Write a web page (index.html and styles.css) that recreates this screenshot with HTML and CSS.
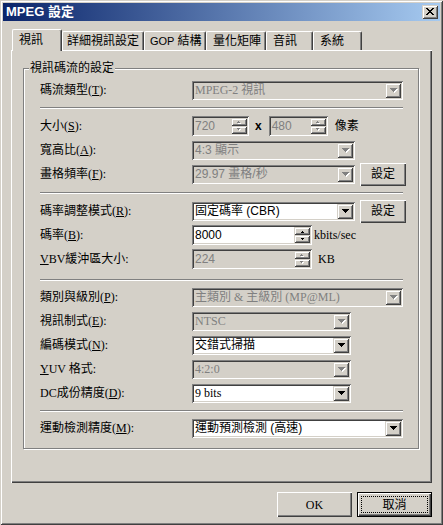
FILE: index.html
```html
<!DOCTYPE html>
<html>
<head>
<meta charset="utf-8">
<title>MPEG 設定</title>
<link rel="stylesheet" href="styles.css">
</head>
<body>
<div class="window">
  <div class="titlebar">
    <span class="title">MPEG 設定</span>
    <div class="close">
      <svg width="8" height="7" viewBox="0 0 8 7" shape-rendering="crispEdges"><path d="M0 0h2v1h-2zM6 0h2v1h-2zM1 1h2v1h-2zM5 1h2v1h-2zM2 2h4v1h-4zM3 3h2v1h-2zM2 4h4v1h-4zM1 5h2v1h-2zM5 5h2v1h-2zM0 6h2v1h-2zM6 6h2v1h-2z" fill="#000"/></svg>
    </div>
  </div>

  <div class="tabs">
    <div class="tab sel w1">視訊</div>
    <div class="tab w2">詳細視訊設定</div>
    <div class="tab w3"><span class="sans gop">GOP</span> 結構</div>
    <div class="tab w4">量化矩陣</div>
    <div class="tab w5">音訊</div>
    <div class="tab w6">系統</div>
  </div>

  <div class="panel">
    <div class="group">
      <div class="legend">視訊碼流的設定</div>
      <div class="rows">

        <div class="row">
          <span class="lbl">碼流類型(<u>T</u>):</span>
          <div class="combo dis full">
            <span class="val">MPEG-2 視訊</span>
            <span class="arrow"><svg width="8" height="5" viewBox="0 0 8 5" shape-rendering="crispEdges"><path d="M1 1h7v1h-7zM2 2h5v1h-5zM3 3h3v1h-3zM4 4h1v1h-1z" fill="#fff"/><path d="M0 0h7v1h-7zM1 1h5v1h-5zM2 2h3v1h-3zM3 3h1v1h-1z" fill="#808080"/></svg></span>
          </div>
        </div>

        <div class="sep s1"></div>

        <div class="row">
          <span class="lbl">大小(<u>S</u>):</span>
          <div class="spin dis sw1">
            <span class="val sans">720</span>
            <span class="btns">
              <span class="sb"><svg width="6" height="4" viewBox="0 0 6 4" shape-rendering="crispEdges"><path d="M2 1h1v1h-1zM1 2h3v1h-3z" fill="#fff" transform="translate(1,1)"/><path d="M2 0h1v1h-1zM1 1h3v1h-3z" fill="#808080" transform="translate(0,1)"/></svg></span>
              <span class="sb"><svg width="6" height="4" viewBox="0 0 6 4" shape-rendering="crispEdges"><path d="M1 0h3v1h-3zM2 1h1v1h-1z" fill="#fff" transform="translate(1,1)"/><path d="M1 0h3v1h-3zM2 1h1v1h-1z" fill="#808080"/></svg></span>
            </span>
          </div>
          <span class="times">x</span>
          <div class="spin dis sw2">
            <span class="val sans">480</span>
            <span class="btns">
              <span class="sb"><svg width="6" height="4" viewBox="0 0 6 4" shape-rendering="crispEdges"><path d="M2 1h1v1h-1zM1 2h3v1h-3z" fill="#fff" transform="translate(1,1)"/><path d="M2 0h1v1h-1zM1 1h3v1h-3z" fill="#808080" transform="translate(0,1)"/></svg></span>
              <span class="sb"><svg width="6" height="4" viewBox="0 0 6 4" shape-rendering="crispEdges"><path d="M1 0h3v1h-3zM2 1h1v1h-1z" fill="#fff" transform="translate(1,1)"/><path d="M1 0h3v1h-3zM2 1h1v1h-1z" fill="#808080"/></svg></span>
            </span>
          </div>
          <span class="unit-px">像素</span>
        </div>

        <div class="row">
          <span class="lbl">寬高比(<u>A</u>):</span>
          <div class="combo dis mid">
            <span class="val sans">4:3 顯示</span>
            <span class="arrow"><svg width="8" height="5" viewBox="0 0 8 5" shape-rendering="crispEdges"><path d="M1 1h7v1h-7zM2 2h5v1h-5zM3 3h3v1h-3zM4 4h1v1h-1z" fill="#fff"/><path d="M0 0h7v1h-7zM1 1h5v1h-5zM2 2h3v1h-3zM3 3h1v1h-1z" fill="#808080"/></svg></span>
          </div>
        </div>

        <div class="row">
          <span class="lbl">畫格頻率(<u>F</u>):</span>
          <div class="combo dis mid">
            <span class="val sans">29.97 畫格/秒</span>
            <span class="arrow"><svg width="8" height="5" viewBox="0 0 8 5" shape-rendering="crispEdges"><path d="M1 1h7v1h-7zM2 2h5v1h-5zM3 3h3v1h-3zM4 4h1v1h-1z" fill="#fff"/><path d="M0 0h7v1h-7zM1 1h5v1h-5zM2 2h3v1h-3zM3 3h1v1h-1z" fill="#808080"/></svg></span>
          </div>
          <button class="btn small">設定</button>
        </div>

        <div class="sep s2"></div>

        <div class="row">
          <span class="lbl">碼率調整模式(<u>R</u>):</span>
          <div class="combo mid">
            <span class="val sans">固定碼率 (CBR)</span>
            <span class="arrow"><svg width="7" height="4" viewBox="0 0 7 4" shape-rendering="crispEdges"><path d="M0 0h7v1h-7zM1 1h5v1h-5zM2 2h3v1h-3zM3 3h1v1h-1z" fill="#000"/></svg></span>
          </div>
          <button class="btn small">設定</button>
        </div>

        <div class="row">
          <span class="lbl">碼率(<u>B</u>):</span>
          <div class="spin sw3">
            <span class="val sans">8000</span>
            <span class="btns">
              <span class="sb"><svg width="5" height="3" viewBox="0 0 5 3" shape-rendering="crispEdges"><path d="M2 0h1v1h-1zM1 1h3v1h-3z" fill="#000" transform="translate(0,1)"/></svg></span>
              <span class="sb"><svg width="5" height="3" viewBox="0 0 5 3" shape-rendering="crispEdges"><path d="M1 0h3v1h-3zM2 1h1v1h-1z" fill="#000"/></svg></span>
            </span>
          </div>
          <span class="unit-k">kbits/sec</span>
        </div>

        <div class="row">
          <span class="lbl"><u>V</u>BV緩沖區大小:</span>
          <div class="spin dis sw3">
            <span class="val sans">224</span>
            <span class="btns">
              <span class="sb"><svg width="6" height="4" viewBox="0 0 6 4" shape-rendering="crispEdges"><path d="M2 1h1v1h-1zM1 2h3v1h-3z" fill="#fff" transform="translate(1,1)"/><path d="M2 0h1v1h-1zM1 1h3v1h-3z" fill="#808080" transform="translate(0,1)"/></svg></span>
              <span class="sb"><svg width="6" height="4" viewBox="0 0 6 4" shape-rendering="crispEdges"><path d="M1 0h3v1h-3zM2 1h1v1h-1z" fill="#fff" transform="translate(1,1)"/><path d="M1 0h3v1h-3zM2 1h1v1h-1z" fill="#808080"/></svg></span>
            </span>
          </div>
          <span class="unit-kb">KB</span>
        </div>

        <div class="sep s3"></div>

        <div class="row">
          <span class="lbl">類別與級別(<u>P</u>):</span>
          <div class="combo dis full">
            <span class="val">主類別 &amp; 主級別 (MP@ML)</span>
            <span class="arrow"><svg width="8" height="5" viewBox="0 0 8 5" shape-rendering="crispEdges"><path d="M1 1h7v1h-7zM2 2h5v1h-5zM3 3h3v1h-3zM4 4h1v1h-1z" fill="#fff"/><path d="M0 0h7v1h-7zM1 1h5v1h-5zM2 2h3v1h-3zM3 3h1v1h-1z" fill="#808080"/></svg></span>
          </div>
        </div>

        <div class="row">
          <span class="lbl">視訊制式(<u>E</u>):</span>
          <div class="combo dis short">
            <span class="val">NTSC</span>
            <span class="arrow"><svg width="8" height="5" viewBox="0 0 8 5" shape-rendering="crispEdges"><path d="M1 1h7v1h-7zM2 2h5v1h-5zM3 3h3v1h-3zM4 4h1v1h-1z" fill="#fff"/><path d="M0 0h7v1h-7zM1 1h5v1h-5zM2 2h3v1h-3zM3 3h1v1h-1z" fill="#808080"/></svg></span>
          </div>
        </div>

        <div class="row">
          <span class="lbl">編碼模式(<u>N</u>):</span>
          <div class="combo short">
            <span class="val">交錯式掃描</span>
            <span class="arrow"><svg width="7" height="4" viewBox="0 0 7 4" shape-rendering="crispEdges"><path d="M0 0h7v1h-7zM1 1h5v1h-5zM2 2h3v1h-3zM3 3h1v1h-1z" fill="#000"/></svg></span>
          </div>
        </div>

        <div class="row">
          <span class="lbl"><u>Y</u>UV 格式:</span>
          <div class="combo dis short">
            <span class="val">4:2:0</span>
            <span class="arrow"><svg width="8" height="5" viewBox="0 0 8 5" shape-rendering="crispEdges"><path d="M1 1h7v1h-7zM2 2h5v1h-5zM3 3h3v1h-3zM4 4h1v1h-1z" fill="#fff"/><path d="M0 0h7v1h-7zM1 1h5v1h-5zM2 2h3v1h-3zM3 3h1v1h-1z" fill="#808080"/></svg></span>
          </div>
        </div>

        <div class="row">
          <span class="lbl">DC成份精度(<u>D</u>):</span>
          <div class="combo short">
            <span class="val">9 bits</span>
            <span class="arrow"><svg width="7" height="4" viewBox="0 0 7 4" shape-rendering="crispEdges"><path d="M0 0h7v1h-7zM1 1h5v1h-5zM2 2h3v1h-3zM3 3h1v1h-1z" fill="#000"/></svg></span>
          </div>
        </div>

        <div class="sep s4"></div>

        <div class="row">
          <span class="lbl">運動檢測精度(<u>M</u>):</span>
          <div class="combo full">
            <span class="val sans">運動預測檢測 (高速)</span>
            <span class="arrow"><svg width="7" height="4" viewBox="0 0 7 4" shape-rendering="crispEdges"><path d="M0 0h7v1h-7zM1 1h5v1h-5zM2 2h3v1h-3zM3 3h1v1h-1z" fill="#000"/></svg></span>
          </div>
        </div>

      </div>
    </div>
  </div>

  <div class="actions">
    <button class="btn big">OK</button>
    <button class="btn big default"><span class="focus">取消</span></button>
  </div>
</div>
</body>
</html>
```
FILE: styles.css
```css
* { box-sizing: border-box; }
html, body { margin: 0; padding: 0; }
body {
  width: 443px;
  height: 525px;
  overflow: hidden;
  background: #D4D0C8;
  font-family: "Liberation Serif", "Noto Sans CJK TC", serif;
  font-size: 12px;
  line-height: 14px;
  color: #000;
}
.sans { font-family: "Liberation Sans", "Noto Sans CJK TC", sans-serif; }

.window {
  width: 443px;
  height: 525px;
  padding: 3px;
  background: #D4D0C8;
  box-shadow: inset 1px 1px 0 #D4D0C8, inset -1px -1px 0 #404040, inset 2px 2px 0 #fff, inset -2px -2px 0 #808080;
  display: flex;
  flex-direction: column;
}

/* title bar */
.titlebar {
  height: 18px;
  flex: none;
  display: flex;
  align-items: center;
  justify-content: space-between;
  padding: 0 2px;
  background: linear-gradient(to right, #0A246A, #A6CAF0);
}
.title {
  color: #fff;
  font-family: "Liberation Sans", "Noto Sans CJK TC", sans-serif;
  font-weight: bold;
  font-size: 13px;
  line-height: 14px;
  padding-left: 1px;
}
.close {
  width: 16px;
  height: 14px;
  background: #D4D0C8;
  box-shadow: inset 1px 1px 0 #D4D0C8, inset -1px -1px 0 #404040, inset 2px 2px 0 #fff, inset -2px -2px 0 #808080;
  display: flex;
  align-items: center;
  justify-content: center;
  padding: 0 1px 1px 0;
}
.close svg { display: block; }

/* tabs */
.tabs {
  display: flex;
  align-items: flex-end;
  height: 21px;
  margin-top: 8px;
  padding-left: 9px;
  flex: none;
}
.tab {
  height: 19px;
  padding: 2px 0 0 6px;
  background: #D4D0C8;
  border-top: 1px solid #fff;
  border-left: 1px solid #fff;
  border-right: 1px solid #404040;
  border-top-left-radius: 2px;
  border-top-right-radius: 2px;
  box-shadow: inset -1px 0 0 #808080;
  white-space: nowrap;
  overflow: hidden;
  flex: none;
}
.tab.sel {
  height: 22px;
  margin-bottom: -1px;
  padding-top: 3px;
  position: relative;
  z-index: 1;
}
.w1 { width: 50px; }
.w2 { width: 82px; padding-left: 4px; }
.w3 { width: 62px; padding-left: 5px; }
.w4 { width: 60px; }
.w5 { width: 47px; }
.w6 { width: 49px; }
.gop { font-size: 11px; }

/* panel */
.panel {
  width: 421px;
  height: 433px;
  margin-left: 8px;
  padding: 18px 0 0 12px;
  flex: none;
  box-shadow: inset 1px 1px 0 #fff, inset -1px -1px 0 #404040, inset -2px -2px 0 #808080;
}
.group {
  width: 396px;
  border: 1px solid #808080;
  box-shadow: inset 1px 1px 0 #fff, 1px 1px 0 #fff;
  padding: 0 0 8px 0;
}
.legend {
  width: max-content;
  height: 14px;
  margin: -8px 0 0 5px;
  padding: 0 1px;
  background: #D4D0C8;
  line-height: 14px;
}
.rows {
  margin-top: 3px;
  padding-left: 16px;
  display: flex;
  flex-direction: column;
}
.row {
  display: flex;
  align-items: center;
  height: 24px;
}
.lbl {
  width: 152px;
  flex: none;
  white-space: nowrap;
}
.lbl u { text-underline-offset: 1px; }

.sep {
  width: 363px;
  height: 2px;
  border-top: 1px solid #808080;
  border-bottom: 1px solid #fff;
}
.s1 { margin: 5px 0; }
.s2 { margin: 6px 0 5px; }
.s3 { margin: 8px 0 4px; }
.s4 { margin: 5px 0 4px; }

/* combo box */
.combo, .spin {
  display: flex;
  flex: none;
  padding: 2px;
  background: #fff;
  box-shadow: inset 1px 1px 0 #808080, inset -1px -1px 0 #fff, inset 2px 2px 0 #404040, inset -2px -2px 0 #D4D0C8;
}
.combo { height: 19px; }
.spin { height: 20px; }
.combo.dis, .spin.dis { background: #D4D0C8; color: #808080; }
.full { width: 211px; }
.mid { width: 163px; }
.short { width: 159px; }
.sw1 { width: 57px; }
.sw2 { width: 59px; }
.sw3 { width: 120px; }

.val {
  flex: 1;
  min-width: 0;
  padding-left: 1px;
  line-height: 15px;
  white-space: nowrap;
  overflow: hidden;
}
.spin .val { line-height: 16px; }
.arrow {
  width: 16px;
  flex: none;
  background: #D4D0C8;
  box-shadow: inset 1px 1px 0 #D4D0C8, inset -1px -1px 0 #404040, inset 2px 2px 0 #fff, inset -2px -2px 0 #808080;
  display: flex;
  align-items: center;
  justify-content: center;
  padding-left: 1px;
}
.arrow svg, .sb svg { display: block; }

.btns {
  width: 16px;
  flex: none;
  display: flex;
  flex-direction: column;
}
.sb {
  flex: 1;
  background: #D4D0C8;
  box-shadow: inset 1px 1px 0 #D4D0C8, inset -1px -1px 0 #404040, inset 2px 2px 0 #fff, inset -2px -2px 0 #808080;
  display: flex;
  align-items: center;
  justify-content: center;
}

.times {
  margin: 0 7px 0 6px;
  font-family: "Liberation Sans", sans-serif;
  font-weight: bold;
}
.unit-px { margin-left: 7px; }
.unit-k { margin-left: 2px; }
.unit-kb { margin-left: 6px; }

/* buttons */
.btn {
  font: inherit;
  color: #000;
  background: #D4D0C8;
  border: 0;
  padding: 0;
  box-shadow: inset 1px 1px 0 #fff, inset -1px -1px 0 #404040, inset -2px -2px 0 #808080;
  display: flex;
  align-items: center;
  justify-content: center;
  flex: none;
}
.btn.small {
  width: 46px;
  height: 23px;
  margin-left: 5px;
}
.actions {
  display: flex;
  justify-content: flex-end;
  gap: 5px;
  margin-top: 9px;
  padding-right: 8px;
}
.btn.big {
  width: 75px;
  height: 25px;
}
.btn.default {
  border: 1px solid #000;
  padding: 3px;
}
.focus {
  width: 100%;
  height: 100%;
  border: 1px dotted #000;
  display: flex;
  align-items: center;
  justify-content: center;
}
```
